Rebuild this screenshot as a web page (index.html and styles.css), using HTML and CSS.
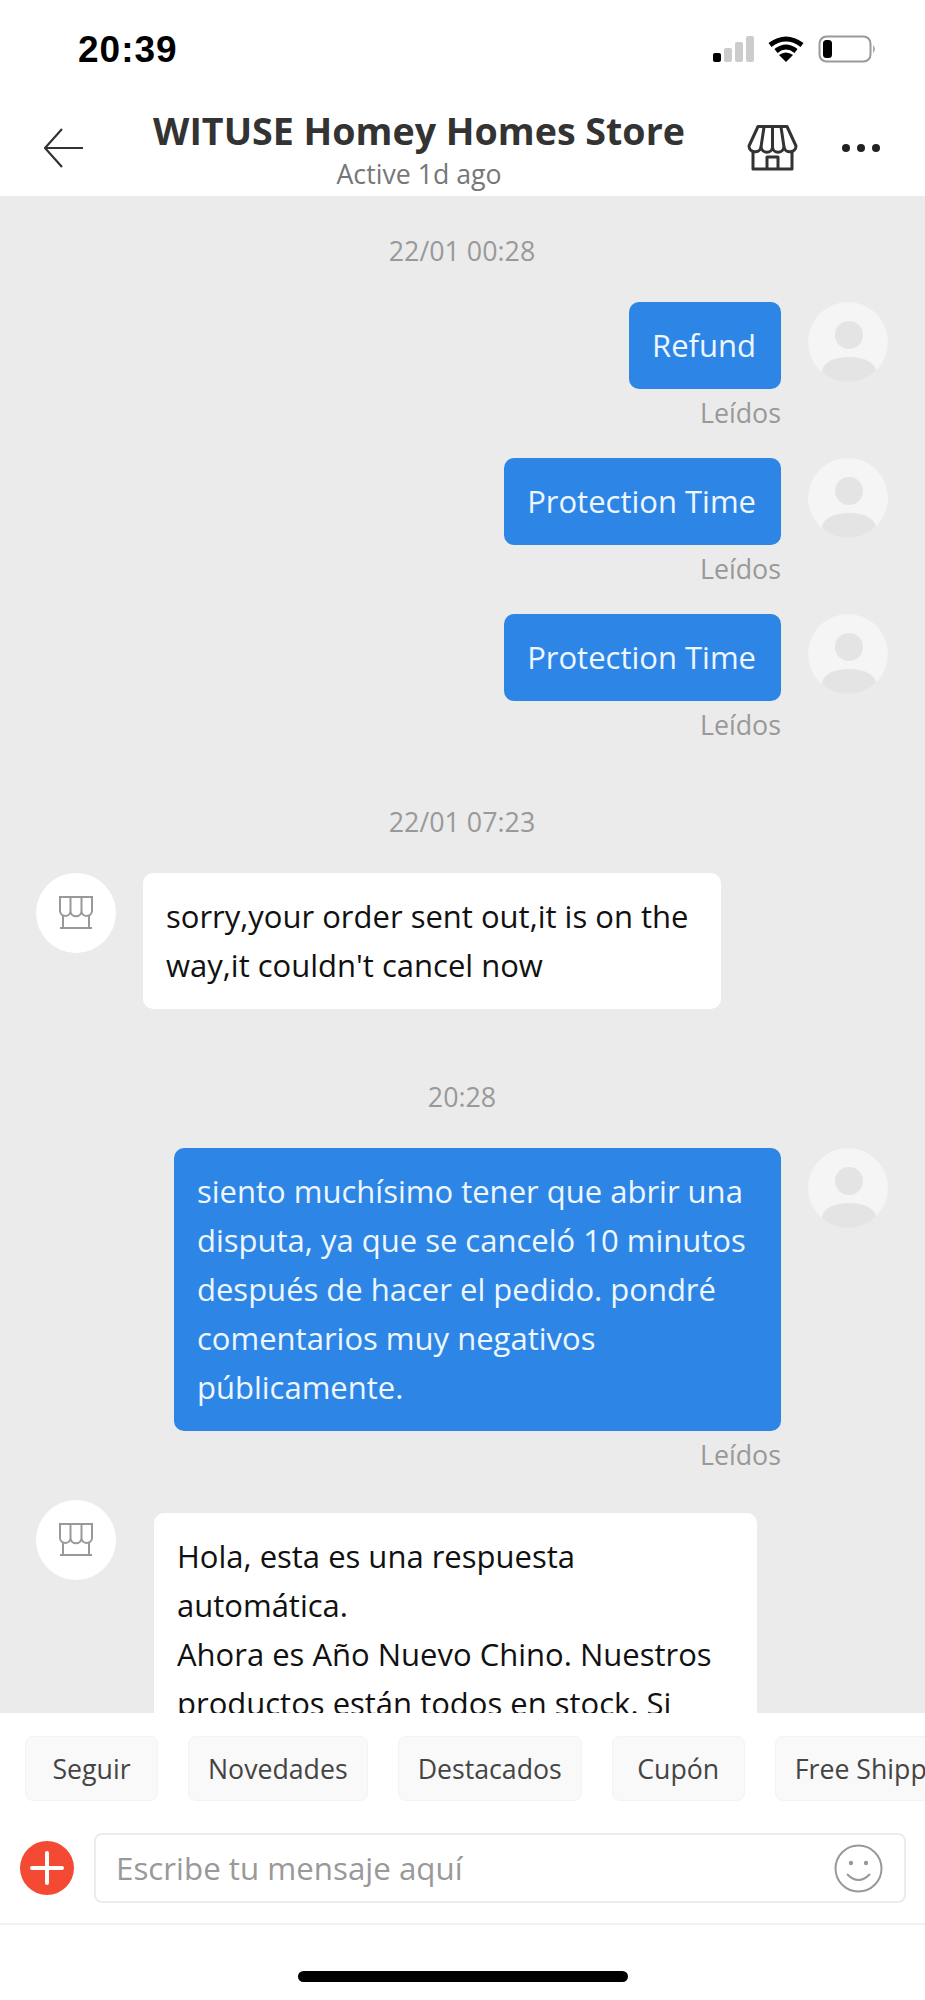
FILE: index.html
```html
<!DOCTYPE html>
<html>
<head>
    <title>WITUSE Homey Homes Store</title>
    <link rel="stylesheet" href="styles.css">
</head>
<body>
    <div id="app">
        <div class="statusbar">
            <div class="clock">20:39</div>
            <div class="status-icons">
                <svg width="41" height="26" viewBox="0 0 41 26">
                    <rect x="0" y="17" width="8" height="9" rx="2" fill="#000"/>
                    <rect x="11" y="12" width="8" height="14" rx="2" fill="#ccc"/>
                    <rect x="22" y="6" width="8" height="20" rx="2" fill="#ccc"/>
                    <rect x="33" y="0" width="8" height="26" rx="2" fill="#ccc"/>
                </svg>
                <svg width="36" height="26" viewBox="0 0 36 26">
                    <path d="M2 9 Q18 -3 34 9" fill="none" stroke="#000" stroke-width="5"/>
                    <path d="M8 15 Q18 7 28 15" fill="none" stroke="#000" stroke-width="5"/>
                    <path d="M18 26 L11 19 Q18 14 25 19 Z" fill="#000"/>
                </svg>
                <svg width="59" height="28" viewBox="0 0 59 28">
                    <rect x="1.5" y="1.5" width="51" height="25" rx="7" fill="none" stroke="#999" stroke-width="2"/>
                    <rect x="5" y="5" width="9" height="18" rx="3.5" fill="#000"/>
                    <path d="M55 10 Q59 14 55 18 Z" fill="#aaa"/>
                </svg>
            </div>
        </div>

        <div class="topbar">
            <svg class="back" width="39" height="40" viewBox="0 0 39 40">
                <path d="M18 1 L1 20 L18 39 M1 20 H39" fill="none" stroke="#333" stroke-width="2.2"/>
            </svg>
            <div class="store-title">
                <div class="store-name">WITUSE Homey Homes Store</div>
                <div class="store-active">Active 1d ago</div>
            </div>
            <svg class="shop" width="51" height="46" viewBox="0 0 51 46">
                <path d="M11 1.5 H40 L49 21 C49 28 38 29 37 22 C36 29 26 29 25.500 22 C25 29 15 29 14 22 C13 29 2 28 2 21 Z" fill="none" stroke="#333" stroke-width="3" stroke-linejoin="round"/>
                <path d="M17 2 L14 22 M25.500 2 V22 M34 2 L37 22" fill="none" stroke="#333" stroke-width="3"/>
                <path d="M6 27 V44 H45 V27 M20 44 V32 H31 V44" fill="none" stroke="#333" stroke-width="3" stroke-linejoin="round"/>
            </svg>
            <div class="more"><i></i><i></i><i></i></div>
        </div>

        <div class="chat">
            <div class="stamp first">22/01 00:28</div>

            <div class="sent">
                <div class="sent-row">
                    <div class="bubble blue">Refund</div>
                    <div class="avatar"><svg width="80" height="80" viewBox="0 0 80 80"><circle cx="41" cy="33" r="14" fill="#e4e4e4"/><ellipse cx="41" cy="69" rx="27" ry="14" fill="#e4e4e4"/></svg></div>
                </div>
                <div class="read">Leídos</div>
            </div>
            <div class="sent">
                <div class="sent-row">
                    <div class="bubble blue">Protection Time</div>
                    <div class="avatar"><svg width="80" height="80" viewBox="0 0 80 80"><circle cx="41" cy="33" r="14" fill="#e4e4e4"/><ellipse cx="41" cy="69" rx="27" ry="14" fill="#e4e4e4"/></svg></div>
                </div>
                <div class="read">Leídos</div>
            </div>
            <div class="sent">
                <div class="sent-row">
                    <div class="bubble blue">Protection Time</div>
                    <div class="avatar"><svg width="80" height="80" viewBox="0 0 80 80"><circle cx="41" cy="33" r="14" fill="#e4e4e4"/><ellipse cx="41" cy="69" rx="27" ry="14" fill="#e4e4e4"/></svg></div>
                </div>
                <div class="read">Leídos</div>
            </div>

            <div class="stamp gap-one">22/01 07:23</div>

            <div class="received">
                <div class="avatar"><svg width="80" height="80" viewBox="0 0 80 80"><path d="M24 24 H56 V38 C56 44 46 45 45.500 38 C45 45 35 45 34.500 38 C34 45 24 44 24 38 Z M34.500 24 V38 M45.500 24 V38 M27 42 V55 H53 V42 M24 55 H56" fill="none" stroke="#999" stroke-width="2"/></svg></div>
                <div class="bubble white width-one">sorry,your order sent out,it is on the way,it couldn't cancel now</div>
            </div>

            <div class="stamp gap-two">20:28</div>

            <div class="sent">
                <div class="sent-row">
                    <div class="bubble blue width-two">siento muchísimo tener que abrir una disputa, ya que se canceló 10 minutos después de hacer el pedido. pondré comentarios muy negativos públicamente.</div>
                    <div class="avatar"><svg width="80" height="80" viewBox="0 0 80 80"><circle cx="41" cy="33" r="14" fill="#e4e4e4"/><ellipse cx="41" cy="69" rx="27" ry="14" fill="#e4e4e4"/></svg></div>
                </div>
                <div class="read">Leídos</div>
            </div>

            <div class="received">
                <div class="avatar"><svg width="80" height="80" viewBox="0 0 80 80"><path d="M24 24 H56 V38 C56 44 46 45 45.500 38 C45 45 35 45 34.500 38 C34 45 24 44 24 38 Z M34.500 24 V38 M45.500 24 V38 M27 42 V55 H53 V42 M24 55 H56" fill="none" stroke="#999" stroke-width="2"/></svg></div>
                <div class="bubble white width-three">Hola, esta es una respuesta automática.<br>Ahora es Año Nuevo Chino. Nuestros productos están todos en stock. Si</div>
            </div>
        </div>

        <div class="footer">
            <div class="chips">
                <div class="chip">Seguir</div>
                <div class="chip">Novedades</div>
                <div class="chip">Destacados</div>
                <div class="chip">Cupón</div>
                <div class="chip">Free Shipping</div>
            </div>
            <div class="compose">
                <svg width="54" height="54" viewBox="0 0 54 54">
                    <circle cx="27" cy="27" r="27" fill="#f44a33"/>
                    <path d="M27 12 V42 M12 27 H42" stroke="#fff" stroke-width="4" stroke-linecap="round"/>
                </svg>
                <div class="message-box">
                    <span class="placeholder">Escribe tu mensaje aquí</span>
                    <svg width="49" height="49" viewBox="0 0 49 49">
                        <circle cx="24.500" cy="24.500" r="23" fill="none" stroke="#999" stroke-width="2"/>
                        <circle cx="17" cy="19" r="2.200" fill="#999"/>
                        <circle cx="32" cy="19" r="2.200" fill="#999"/>
                        <path d="M13 30 Q24.500 42 36 30" fill="none" stroke="#999" stroke-width="2"/>
                    </svg>
                </div>
            </div>
            <div class="home-bar"><div class="home-indicator"></div></div>
        </div>
    </div>
</body>
</html>
```

FILE: styles.css
```css
body {
    margin: 0;
    font-family: "Open Sans", sans-serif;
    background-color: #fff;
}
svg {
    display: block;
    flex-shrink: 0;
}
#app {
    width: 925px;
    height: 2000px;
    display: flex;
    flex-direction: column;
    overflow: hidden;
}

/* status bar */
.statusbar {
    height: 98px;
    display: flex;
    justify-content: space-between;
    align-items: flex-start;
    padding: 30px 48px 0 78px;
    box-sizing: border-box;
}
.clock {
    font-family: "Liberation Sans", Arial, sans-serif;
    font-weight: bold;
    font-size: 37px;
    line-height: 40px;
    letter-spacing: 1px;
    color: #000;
}
.status-icons {
    display: flex;
    align-items: center;
    gap: 14px;
    padding-top: 5px;
}

/* header */
.topbar {
    height: 98px;
    display: flex;
    align-items: flex-start;
    padding: 0 45px 0 44px;
    box-sizing: border-box;
    background-color: #fff;
}
.back {
    margin-top: 30px;
}
.store-title {
    flex: 1;
    text-align: center;
    padding-left: 8px;
    padding-top: 6px;
}
.store-name {
    font-weight: bold;
    font-size: 37.600px;
    line-height: 53px;
    color: #333;
}
.store-active {
    font-size: 26.700px;
    line-height: 33px;
    color: #777;
}
.shop {
    margin-top: 27px;
}
.more {
    display: flex;
    gap: 7px;
    margin: 46px 0 0 44px;
}
.more i {
    width: 8px;
    height: 8px;
    border-radius: 50%;
    background-color: #222;
}

/* chat */
.chat {
    flex: 1;
    min-height: 0;
    overflow: hidden;
    background-color: #ebebeb;
    padding: 37px 37px 0 36px;
}
.stamp {
    text-align: center;
    font-size: 26.800px;
    line-height: 36px;
    color: #999;
    margin-bottom: 33px;
}
.stamp.gap-one {
    margin-top: 63px;
}
.stamp.gap-two {
    margin-top: 70px;
}
.sent {
    margin-bottom: 29px;
}
.sent-row {
    display: flex;
    justify-content: flex-end;
    align-items: flex-start;
    gap: 27px;
}
.received {
    display: flex;
    align-items: flex-start;
    gap: 27px;
}
.avatar {
    width: 80px;
    height: 80px;
    border-radius: 50%;
    background-color: #f5f5f5;
    overflow: hidden;
    flex-shrink: 0;
}
.received .avatar {
    background-color: #fff;
}
.bubble {
    font-size: 31px;
    line-height: 49px;
    padding: 19px 25px 19px 23px;
    border-radius: 10px;
    box-sizing: border-box;
}
.blue {
    background-color: #2d86e6;
    color: #eef6ff;
}
.white {
    background-color: #fff;
    color: #111;
}
.width-one {
    width: 578px;
}
.width-two {
    width: 607px;
}
.width-three {
    width: 603px;
    margin: 13px 0 0 11px;
}
.read {
    font-size: 26.800px;
    line-height: 32px;
    color: #999;
    text-align: right;
    padding-right: 107px;
    margin-top: 8px;
}

/* footer */
.footer {
    height: 287px;
    background-color: #fff;
    flex-shrink: 0;
}
.chips {
    display: flex;
    gap: 30px;
    padding: 23px 0 0 25px;
    overflow: hidden;
}
.chip {
    flex-shrink: 0;
    min-width: 133px;
    height: 65px;
    padding: 0 19px;
    box-sizing: border-box;
    display: flex;
    align-items: center;
    justify-content: center;
    background-color: #f9f9f9;
    border: 1px solid #f3f3f3;
    border-radius: 8px;
    font-size: 26.700px;
    color: #444;
}
.compose {
    display: flex;
    align-items: center;
    gap: 20px;
    padding: 32px 19px 20px 20px;
    border-bottom: 2px solid #f2f2f2;
}
.message-box {
    flex: 1;
    height: 70px;
    display: flex;
    align-items: center;
    justify-content: space-between;
    padding: 0 21px 0 20px;
    box-sizing: border-box;
    border: 2px solid #ececec;
    border-radius: 8px;
}
.placeholder {
    font-size: 31.300px;
    color: #999;
}
.home-bar {
    padding-top: 46px;
}
.home-indicator {
    width: 330px;
    height: 11px;
    margin: 0 auto;
    border-radius: 6px;
    background-color: #000;
}
```
